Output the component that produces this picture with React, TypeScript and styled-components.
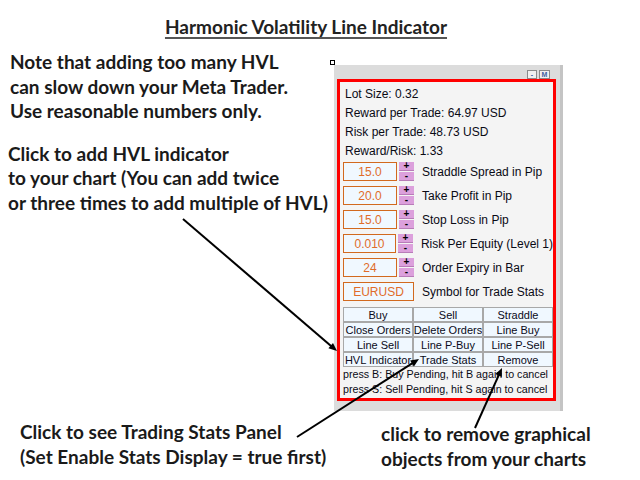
import styled, { createGlobalStyle } from "styled-components";

const GlobalStyle = createGlobalStyle`
    html, body {
        margin: 0;
        padding: 0;
        background: #ffffff;
    }
    * {
        box-sizing: border-box;
    }
`;

const annotationFont = `"Lato", "Open Sans", sans-serif`;
const panelFont = `"Liberation Sans", Arial, sans-serif`;

const Page = styled.div`
    position: relative;
    width: 640px;
    height: 480px;
    overflow: hidden;
    background: #ffffff;
    font-family: ${annotationFont};
    color: #1a1a1a;
`;

const Title = styled.h1`
    margin: 0;
    padding: 15px 28px 0 0;
    height: 48px;
    font-size: 19px;
    line-height: 23px;
    font-weight: 700;
    text-align: center;
    color: #222222;
    text-decoration: underline;
    text-decoration-color: #555555;
    text-decoration-thickness: 2px;
    text-underline-offset: 3px;
`;

const Body = styled.div`
    display: flex;
    align-items: flex-start;
`;

const Notes = styled.div`
    width: 330px;
    display: flex;
    flex-direction: column;
`;

const Note = styled.p<{ $top: number; $left: number }>`
    margin: ${(p) => p.$top}px 0 0;
    padding-left: ${(p) => p.$left}px;
    font-size: 19px;
    line-height: 24.5px;
    font-weight: 700;
    white-space: nowrap;
`;

const PanelColumn = styled.div`
    display: flex;
    align-items: flex-start;
    padding-top: 12px;
`;

const Anchor = styled.div`
    width: 5px;
    height: 5px;
    border: 1px solid #000000;
    background: #ffffff;
`;

const Panel = styled.div`
    margin: 5px 0 0 -1px;
    width: 229px;
    padding: 5px 4px 10px 3px;
    background: #dcdcdc;
    border-right: 3px solid #c4c4c4;
    font-family: ${panelFont};
`;

const PanelBar = styled.div`
    display: flex;
    justify-content: flex-end;
    gap: 2px;
    height: 9px;
    padding-right: 6px;
`;

const MiniButton = styled.div<{ $w: number }>`
    width: ${(p) => p.$w}px;
    height: 9px;
    display: flex;
    align-items: center;
    justify-content: center;
    background: #f0f0f0;
    border: 1px solid #8a8a8a;
    color: #4060a0;
    font-size: 7px;
    line-height: 7px;
    font-weight: 700;
`;

const Frame = styled.div`
    height: 322px;
    border: 3px solid #ff0000;
    background: #f4f4f4;
    padding: 3px 0 0 3px;
    display: flex;
    flex-direction: column;
    color: #0a0a14;
    font-size: 12px;
`;

const InfoLine = styled.div`
    padding-left: 2px;
    line-height: 19px;
    white-space: nowrap;
`;

const FieldList = styled.div`
    display: flex;
    flex-direction: column;
    gap: 5px;
    margin-top: 1px;
`;

const FieldRow = styled.div`
    display: flex;
    align-items: center;
    height: 19px;
`;

const ValueBox = styled.div<{ $w: number }>`
    width: ${(p) => p.$w}px;
    height: 19px;
    display: flex;
    align-items: center;
    justify-content: center;
    border: 1px solid #d2691e;
    background: #f0f8ff;
    color: #e06c2a;
    font-size: 12px;
`;

const Spinner = styled.div`
    display: flex;
    flex-direction: column;
    gap: 1px;
    margin-left: 2px;
`;

const SpinButton = styled.div`
    width: 15px;
    height: 9px;
    display: flex;
    align-items: center;
    justify-content: center;
    background: #dca0dc;
    border-bottom: 1px solid #b87cb8;
    color: #000000;
    font-size: 10px;
    line-height: 8px;
    font-weight: 700;
`;

const FieldLabel = styled.span`
    margin-left: 8px;
    white-space: nowrap;
`;

const ButtonGrid = styled.div`
    display: grid;
    grid-template-columns: repeat(3, 70px);
    grid-auto-rows: 15px;
    margin-top: 6px;
`;

const PanelButton = styled.div`
    display: flex;
    align-items: center;
    justify-content: center;
    overflow: hidden;
    white-space: nowrap;
    background: #f0f8ff;
    border: 1px solid #a8a8a8;
    color: #0a0a20;
    font-size: 11px;
`;

const Hint = styled.div`
    font-size: 10.7px;
    line-height: 15px;
    white-space: nowrap;
`;

const Footer = styled.div`
    display: flex;
    margin-top: 8px;
`;

const Caption = styled.p<{ $w: number; $left: number; $top: number }>`
    margin: ${(p) => p.$top}px 0 0;
    width: ${(p) => p.$w}px;
    padding-left: ${(p) => p.$left}px;
    font-size: 19px;
    line-height: 25px;
    font-weight: 700;
    white-space: nowrap;
`;

const Arrows = styled.svg`
    position: absolute;
    left: 0;
    top: 0;
    pointer-events: none;
`;

interface FieldProps {
    value: string;
    label: string;
}

const fields: FieldProps[] = [
    { value: "15.0", label: "Straddle Spread in Pip" },
    { value: "20.0", label: "Take Profit in Pip" },
    { value: "15.0", label: "Stop Loss in Pip" },
    { value: "0.010", label: "Risk Per Equity (Level 1)" },
    { value: "24", label: "Order Expiry in Bar" },
];

const buttons: string[] = [
    "Buy", "Sell", "Straddle",
    "Close Orders", "Delete Orders", "Line Buy",
    "Line Sell", "Line P-Buy", "Line P-Sell",
    "HVL Indicator", "Trade Stats", "Remove",
];

// arrow from (x1,y1) to tip (x2,y2)
function Arrow(props: { x1: number; y1: number; x2: number; y2: number }): JSX.Element {
    const { x1, y1, x2, y2 } = props;
    const a = Math.atan2(y2 - y1, x2 - x1);
    const len = 9;
    const spread = 0.4;
    const p1 = `${x2 - len * Math.cos(a - spread)},${y2 - len * Math.sin(a - spread)}`;
    const p2 = `${x2 - len * Math.cos(a + spread)},${y2 - len * Math.sin(a + spread)}`;
    return (
        <g>
            <line x1={x1} y1={y1} x2={x2 - 4 * Math.cos(a)} y2={y2 - 4 * Math.sin(a)} stroke="#000" strokeWidth={2} />
            <polygon points={`${x2},${y2} ${p1} ${p2}`} fill="#000" />
        </g>
    );
}

function TradePanel(): JSX.Element {
    return (
        <Panel>
            <PanelBar>
                <MiniButton $w={10}>-</MiniButton>
                <MiniButton $w={11}>M</MiniButton>
            </PanelBar>
            <Frame>
                <InfoLine>Lot Size: 0.32</InfoLine>
                <InfoLine>Reward per Trade: 64.97 USD</InfoLine>
                <InfoLine>Risk per Trade: 48.73 USD</InfoLine>
                <InfoLine>Reward/Risk: 1.33</InfoLine>
                <FieldList>
                    {fields.map((f) => (
                        <FieldRow key={f.label}>
                            <ValueBox $w={54}>{f.value}</ValueBox>
                            <Spinner>
                                <SpinButton>+</SpinButton>
                                <SpinButton>-</SpinButton>
                            </Spinner>
                            <FieldLabel>{f.label}</FieldLabel>
                        </FieldRow>
                    ))}
                    <FieldRow>
                        <ValueBox $w={71}>EURUSD</ValueBox>
                        <FieldLabel>Symbol for Trade Stats</FieldLabel>
                    </FieldRow>
                </FieldList>
                <ButtonGrid>
                    {buttons.map((b) => (
                        <PanelButton key={b}>{b}</PanelButton>
                    ))}
                </ButtonGrid>
                <Hint>press B: Buy Pending, hit B again to cancel</Hint>
                <Hint>press S: Sell Pending, hit S again to cancel</Hint>
            </Frame>
        </Panel>
    );
}

function App(): JSX.Element {
    return (
        <Page>
            <GlobalStyle />
            <Title>Harmonic Volatility Line Indicator</Title>
            <Body>
                <Notes>
                    <Note $top={2} $left={10}>
                        Note that adding too many HVL
                        <br />
                        can slow down your Meta Trader.
                        <br />
                        Use reasonable numbers only.
                    </Note>
                    <Note $top={18} $left={8}>
                        Click to add HVL indicator
                        <br />
                        to your chart (You can add twice
                        <br />
                        or three times to add multiple of HVL)
                    </Note>
                </Notes>
                <PanelColumn>
                    <Anchor />
                    <TradePanel />
                </PanelColumn>
            </Body>
            <Footer>
                <Caption $w={361} $left={20} $top={0}>
                    Click to see Trading Stats Panel
                    <br />
                    (Set Enable Stats Display = true first)
                </Caption>
                <Caption $w={260} $left={20} $top={2}>
                    click to remove graphical
                    <br />
                    objects from your charts
                </Caption>
            </Footer>
            <Arrows width={640} height={480} viewBox="0 0 640 480">
                <Arrow x1={183} y1={219} x2={337} y2={351} />
                <Arrow x1={297} y1={437} x2={419} y2={359} />
                <Arrow x1={475} y1={428} x2={502} y2={368} />
            </Arrows>
        </Page>
    );
}

export default App;
